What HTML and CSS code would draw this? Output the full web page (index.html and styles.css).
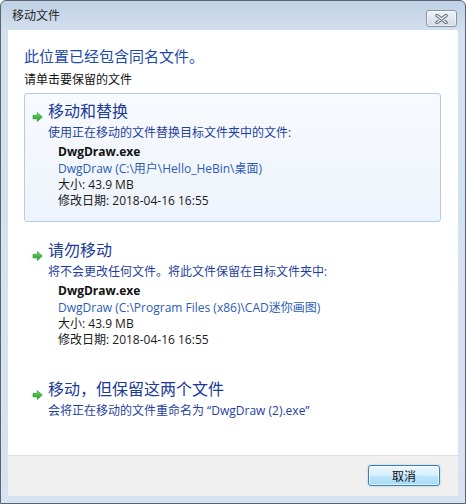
FILE: index.html
```html
<!DOCTYPE html>
<html lang="zh-CN">
<head>
<meta charset="utf-8">
<title>移动文件</title>
<link rel="stylesheet" href="styles.css">
</head>
<body>
<div class="window">
  <div class="titlebar">
    <span class="title">移动文件</span>
    <button class="close" aria-label="关闭">
      <svg width="13" height="10" viewBox="0 0 13 10">
        <path d="M2 1.5 L11 8.5 M11 1.5 L2 8.5" stroke="#5f6875" stroke-width="3.4" stroke-linecap="round" fill="none"/>
        <path d="M2 1.5 L11 8.5 M11 1.5 L2 8.5" stroke="#f4f6f9" stroke-width="1.4" stroke-linecap="round" fill="none"/>
      </svg>
    </button>
  </div>
  <div class="client">
    <div class="content">
      <div class="instruction">此位置已经包含同名文件。</div>
      <div class="subtitle">请单击要保留的文件</div>

      <div class="option selected">
        <svg class="arrow" width="16" height="12" viewBox="0 0 16 12">
          <defs>
            <linearGradient id="g1" x1="0" y1="0" x2="0" y2="1">
              <stop offset="0" stop-color="#78dc72"/>
              <stop offset="1" stop-color="#159a17"/>
            </linearGradient>
            <radialGradient id="h1">
              <stop offset="0" stop-color="#b9bfc6" stop-opacity=".7"/>
              <stop offset="1" stop-color="#ffffff" stop-opacity="0"/>
            </radialGradient>
          </defs>
          <ellipse cx="6" cy="7" rx="6" ry="5" fill="url(#h1)"/>
          <path d="M4 4.3 H8.3 V1.4 L13.4 6 L8.3 10.6 V7.7 H4 Z" fill="url(#g1)" stroke="#1f8e21" stroke-width=".5" stroke-linejoin="round"/>
        </svg>
        <div class="option-body">
          <div class="option-title">移动和替换</div>
          <div class="option-desc">使用正在移动的文件替换目标文件夹中的文件:</div>
          <div class="file">
            <div class="file-name">DwgDraw.exe</div>
            <div class="file-path">DwgDraw (C:\用户\Hello_HeBin\桌面)</div>
            <div class="file-meta">大小: 43.9 MB</div>
            <div class="file-meta">修改日期: 2018-04-16 16:55</div>
          </div>
        </div>
      </div>

      <div class="option">
        <svg class="arrow" width="16" height="12" viewBox="0 0 16 12">
          <defs>
            <linearGradient id="g2" x1="0" y1="0" x2="0" y2="1">
              <stop offset="0" stop-color="#78dc72"/>
              <stop offset="1" stop-color="#159a17"/>
            </linearGradient>
            <radialGradient id="h2">
              <stop offset="0" stop-color="#b9bfc6" stop-opacity=".7"/>
              <stop offset="1" stop-color="#ffffff" stop-opacity="0"/>
            </radialGradient>
          </defs>
          <ellipse cx="6" cy="7" rx="6" ry="5" fill="url(#h2)"/>
          <path d="M4 4.3 H8.3 V1.4 L13.4 6 L8.3 10.6 V7.7 H4 Z" fill="url(#g2)" stroke="#1f8e21" stroke-width=".5" stroke-linejoin="round"/>
        </svg>
        <div class="option-body">
          <div class="option-title">请勿移动</div>
          <div class="option-desc">将不会更改任何文件。将此文件保留在目标文件夹中:</div>
          <div class="file">
            <div class="file-name">DwgDraw.exe</div>
            <div class="file-path">DwgDraw (C:\Program Files (x86)\CAD迷你画图)</div>
            <div class="file-meta">大小: 43.9 MB</div>
            <div class="file-meta">修改日期: 2018-04-16 16:55</div>
          </div>
        </div>
      </div>

      <div class="option">
        <svg class="arrow" width="16" height="12" viewBox="0 0 16 12">
          <defs>
            <linearGradient id="g3" x1="0" y1="0" x2="0" y2="1">
              <stop offset="0" stop-color="#78dc72"/>
              <stop offset="1" stop-color="#159a17"/>
            </linearGradient>
            <radialGradient id="h3">
              <stop offset="0" stop-color="#b9bfc6" stop-opacity=".7"/>
              <stop offset="1" stop-color="#ffffff" stop-opacity="0"/>
            </radialGradient>
          </defs>
          <ellipse cx="6" cy="7" rx="6" ry="5" fill="url(#h3)"/>
          <path d="M4 4.3 H8.3 V1.4 L13.4 6 L8.3 10.6 V7.7 H4 Z" fill="url(#g3)" stroke="#1f8e21" stroke-width=".5" stroke-linejoin="round"/>
        </svg>
        <div class="option-body">
          <div class="option-title">移动，但保留这两个文件</div>
          <div class="option-desc">会将正在移动的文件重命名为 “DwgDraw (2).exe”</div>
        </div>
      </div>
    </div>
    <div class="footer">
      <button class="btn">取消</button>
    </div>
  </div>
</div>
</body>
</html>
```

FILE: styles.css
```css
* { box-sizing: border-box; }

html, body {
  margin: 0;
  padding: 0;
  background: #ffffff;
}

body {
  font-family: "Open Sans", "Noto Sans CJK SC", sans-serif;
  font-size: 12px;
  color: #1a1a1a;
}

.window {
  width: 466px;
  height: 504px;
  border: 1px solid #5b6572;
  border-radius: 6px 6px 0 0;
  background: linear-gradient(to bottom, #c0d1e5 0px, #d3e0ef 30px, #d7e3f1 100%);
  display: flex;
  flex-direction: column;
}

.titlebar {
  height: 29px;
  display: flex;
  justify-content: space-between;
  align-items: flex-start;
  padding: 0 8px 0 11px;
}

.title {
  margin-top: 7px;
  font-size: 12px;
  line-height: 16px;
  color: #2a2a2a;
}

.close {
  margin-top: 9px;
  width: 31px;
  height: 17px;
  padding: 0;
  border: 1px solid #8894a3;
  border-radius: 3px;
  background: linear-gradient(to bottom, #eef2f7 0%, #dfe6ef 50%, #cfd9e5 100%);
  box-shadow: inset 0 0 0 1px rgba(255, 255, 255, 0.6);
  display: flex;
  align-items: center;
  justify-content: center;
}

.client {
  flex: 1;
  margin: 0 7px 7px 7px;
  display: flex;
  flex-direction: column;
  background: #ffffff;
}

.content {
  flex: 1;
  padding: 16px 17px 0 16px;
}

.instruction {
  font-size: 15px;
  line-height: 20px;
  color: #1a49ab;
}

.subtitle {
  margin-top: 6px;
  font-size: 12px;
  line-height: 16px;
  color: #111111;
}

.option {
  margin-top: 5px;
  display: flex;
  align-items: flex-start;
  padding: 7px 8px 12px 4px;
  border: 1px solid transparent;
  border-radius: 3px;
}

.option + .option {
  margin-top: 10px;
}

.option.selected {
  border-color: #b1cced;
  background: linear-gradient(to bottom, #f7fafe 0%, #eef4fc 100%);
}

.arrow {
  flex: none;
  margin-top: 10px;
  margin-right: 3px;
}

.option-title {
  font-size: 16px;
  line-height: 20px;
  color: #1c3a98;
}

.option-desc {
  margin-top: 4px;
  font-size: 12px;
  line-height: 16px;
  color: #1f3f9e;
}

.file {
  margin-top: 2px;
  padding-left: 10px;
}

.file-name {
  font-weight: bold;
  line-height: 18px;
  color: #111111;
}

.file-path {
  line-height: 16px;
  color: #2d5cb6;
}

.file-meta {
  line-height: 16px;
  color: #1a1a1a;
}

.footer {
  height: 41px;
  border-top: 1px solid #dcdcdc;
  background: #f0f0f0;
  display: flex;
  justify-content: flex-end;
  align-items: flex-start;
  padding: 9px 18px 0 0;
}

.btn {
  width: 72px;
  height: 21px;
  padding: 0;
  font-family: "Open Sans", "Noto Sans CJK SC", sans-serif;
  font-size: 12px;
  color: #111111;
  border: 1px solid #3c7fb1;
  border-radius: 3px;
  background: linear-gradient(to bottom, #eaf6fd 0%, #d9f0fc 48%, #bee6fd 52%, #a7d9f5 100%);
  box-shadow: inset 0 0 0 1px rgba(255, 255, 255, 0.65), 0 0 2px rgba(80, 170, 230, 0.6);
}
```
